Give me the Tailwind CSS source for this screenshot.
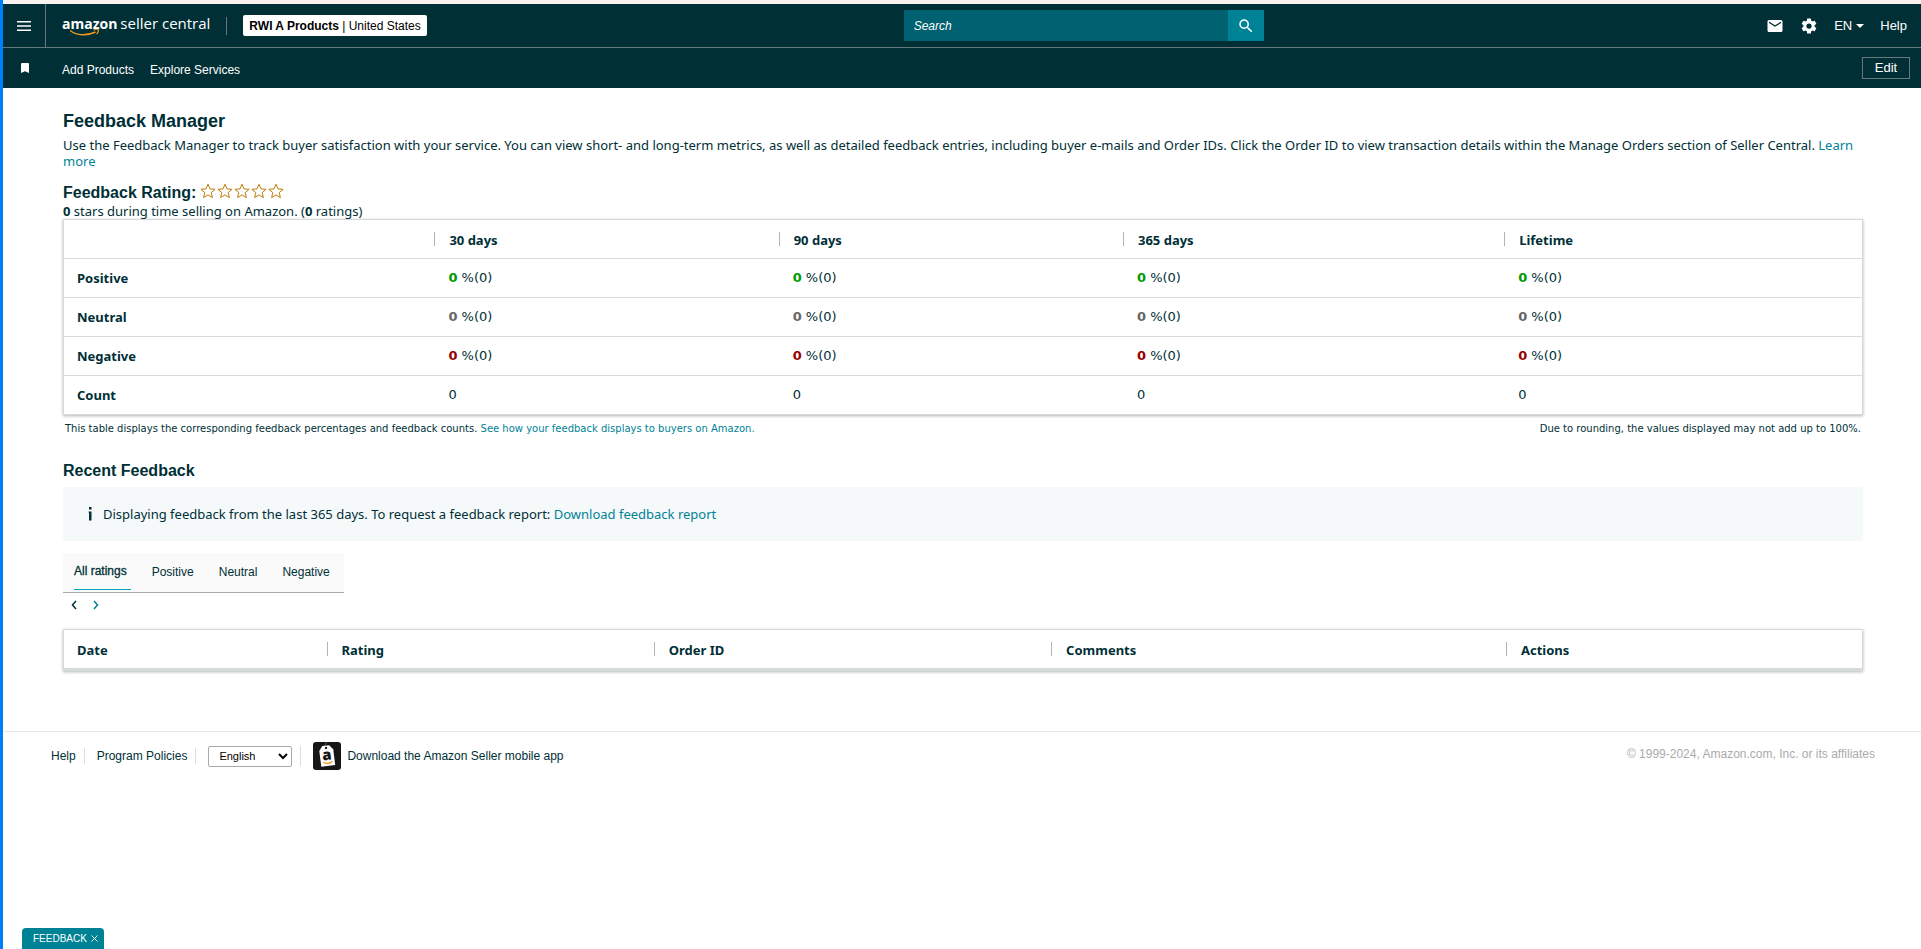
<!DOCTYPE html>
<html lang="en">
<head>
  <meta charset="UTF-8">
  <meta name="viewport" content="width=device-width, initial-scale=1.0">
  <title>Feedback Manager</title>
  <script src="https://cdn.jsdelivr.net/npm/@tailwindcss/browser@4"></script>
</head>
<body class="min-h-screen flex flex-col border-l-3 border-[#0080f8] bg-white text-[#002f36] text-[13px] leading-4 font-['Noto_Sans',sans-serif]">
  <!-- Header -->
  <header class="border-t-4 border-[#f8f3f1] bg-[#002f36] text-white font-['Liberation_Sans',sans-serif]">
    <div class="flex items-center justify-between h-11 border-b border-[#667a7e]">
      <div class="flex flex-[7] items-center h-full">
        <button class="flex items-center justify-center w-[43px] h-full border-r border-[#667a7e]" aria-label="Menu">
          <svg class="w-3.5 h-2.5" viewBox="0 0 14 10" fill="currentColor"><path d="M0 0h14v1.5H0zM0 4.2h14v1.5H0zM0 8.4h14v1.5H0z"/></svg>
        </button>
        <a href="#" class="relative ml-4 flex items-baseline gap-[3px] font-['Open_Sans',sans-serif] leading-5 pb-1">
          <span class="text-sm leading-5 font-bold">amazon</span><span class="text-[15px]">seller central</span>
          <svg class="absolute left-2 top-4 w-8 h-2" viewBox="0 0 32 8" fill="none" stroke="#f19a20"><path d="M0 1.500C7 6.800 17 7 25.500 3" stroke-width="1.400"/><path d="M23.500 1c2-.7 4.300-.8 4.700-.2s-.3 2.800-1.600 4.200" stroke-width="1.200"/></svg>
        </a>
        <span class="ml-4 w-px h-[18px] bg-[#667a7e]"></span>
        <button class="ml-4 h-[21px] px-1.5 rounded-xs bg-white text-black text-xs"><b>RWI A Products</b> | United States</button>
      </div>
      <form class="flex w-[360px] h-[31px]">
        <input type="search" aria-label="Search" placeholder="Search" class="flex-1 min-w-0 px-2.5 bg-[#006170] text-xs italic placeholder:text-white">
        <button type="button" class="flex items-center justify-center w-9 bg-[#008296]" aria-label="Submit search">
          <svg class="w-[18px] h-[18px]" viewBox="0 0 24 24" fill="currentColor"><path d="M15.500 14h-.79l-.28-.27A6.470 6.470 0 0 0 16 9.500 6.500 6.500 0 1 0 9.500 16c1.610 0 3.090-.59 4.230-1.570l.27.280v.79l5 4.990L20.490 19l-4.990-5zm-6 0C7.010 14 5 11.990 5 9.500S7.010 5 9.500 5 14 7.010 14 9.500 11.990 14 9.500 14z"/></svg>
        </button>
      </form>
      <nav class="flex flex-[5] items-center justify-end pr-3.5 text-[13px]">
        <a href="#" aria-label="Messages"><svg class="w-[18px] h-[18px]" viewBox="0 0 24 24" fill="currentColor"><path d="M20 4H4a2 2 0 0 0-2 2v12c0 1.100.9 2 2 2h16a2 2 0 0 0 2-2V6a2 2 0 0 0-2-2zm0 4-8 5-8-5V6l8 5 8-5v2z"/></svg></a>
        <a href="#" class="ml-4" aria-label="Settings"><svg class="w-[18px] h-[18px]" viewBox="0 0 24 24" fill="currentColor"><path d="M19.430 12.980c.04-.32.070-.64.070-.98s-.03-.66-.07-.98l2.110-1.650a.5.5 0 0 0 .12-.64l-2-3.460a.5.5 0 0 0-.61-.22l-2.490 1a7.300 7.300 0 0 0-1.690-.98l-.38-2.650A.49.49 0 0 0 14 2h-4a.49.49 0 0 0-.49.420l-.38 2.650c-.61.250-1.170.59-1.690.98l-2.490-1a.5.5 0 0 0-.61.220l-2 3.460a.5.5 0 0 0 .12.640l2.110 1.650c-.04.320-.07.650-.07.980s.03.660.07.980l-2.110 1.650a.5.5 0 0 0-.12.640l2 3.460c.12.220.39.300.61.220l2.490-1c.52.400 1.080.73 1.690.98l.38 2.650c.03.240.24.420.49.420h4c.25 0 .46-.18.490-.42l.38-2.650a7.700 7.700 0 0 0 1.690-.98l2.490 1c.23.090.49 0 .61-.22l2-3.460a.5.5 0 0 0-.12-.64l-2.110-1.650zM12 15.500a3.500 3.500 0 1 1 0-7 3.500 3.500 0 0 1 0 7z"/></svg></a>
        <button class="ml-4 flex items-center gap-1">EN <svg class="w-2 h-1" viewBox="0 0 8 4" fill="currentColor"><path d="M0 0h8L4 4z"/></svg></button>
        <a href="#" class="ml-4">Help</a>
      </nav>
    </div>
    <div class="flex items-center h-10 pr-[11px] text-xs">
      <button class="flex justify-center w-[43px]" aria-label="Favorites">
        <svg class="w-2 h-2.5" viewBox="0 0 8 10" fill="currentColor"><path d="M0 1a1 1 0 0 1 1-1h6a1 1 0 0 1 1 1v9L4 8.200 0 10z"/></svg>
      </button>
      <nav class="ml-4 pt-[3px] flex gap-4">
        <a href="#">Add Products</a>
        <a href="#">Explore Services</a>
      </nav>
      <button class="ml-auto w-12 h-[22px] border border-[#667a7e] text-[13px]">Edit</button>
    </div>
  </header>

  <main class="pl-15 pr-[58px] pt-[23px]">
    <h1 class="font-['Liberation_Sans',sans-serif] font-bold text-lg leading-5">Feedback Manager</h1>
    <p class="mt-1.5">Use the Feedback Manager to track buyer satisfaction with your service. You can view short- and long-term metrics, as well as detailed feedback entries, including buyer e-mails and Order IDs. Click the Order ID to view transaction details within the Manage Orders section of Seller Central. <a href="#" class="text-[#008296]">Learn more</a></p>

    <!-- Rating summary -->
    <div class="mt-3.5 flex items-center gap-1">
      <h2 class="font-['Liberation_Sans',sans-serif] font-bold text-base leading-5">Feedback Rating:</h2>
      <div class="flex gap-px pb-1" role="img" aria-label="0 out of 5 stars">
        <svg class="w-4 h-4" viewBox="0 0 16 16" fill="none" stroke="#c07c0a"><path d="M8 1.200l2 4.700 5.100.4-3.900 3.300 1.200 5L8 11.900l-4.400 2.700 1.200-5L.9 6.300 6 5.900z"/></svg>
        <svg class="w-4 h-4" viewBox="0 0 16 16" fill="none" stroke="#c07c0a"><path d="M8 1.200l2 4.700 5.100.4-3.900 3.300 1.200 5L8 11.900l-4.400 2.700 1.200-5L.9 6.300 6 5.900z"/></svg>
        <svg class="w-4 h-4" viewBox="0 0 16 16" fill="none" stroke="#c07c0a"><path d="M8 1.200l2 4.700 5.100.4-3.900 3.300 1.200 5L8 11.900l-4.400 2.700 1.200-5L.9 6.300 6 5.900z"/></svg>
        <svg class="w-4 h-4" viewBox="0 0 16 16" fill="none" stroke="#c07c0a"><path d="M8 1.200l2 4.700 5.100.4-3.900 3.300 1.200 5L8 11.900l-4.400 2.700 1.200-5L.9 6.300 6 5.900z"/></svg>
        <svg class="w-4 h-4" viewBox="0 0 16 16" fill="none" stroke="#c07c0a"><path d="M8 1.200l2 4.700 5.100.4-3.900 3.300 1.200 5L8 11.900l-4.400 2.700 1.200-5L.9 6.300 6 5.900z"/></svg>
      </div>
    </div>
    <p><b>0</b> stars during time selling on Amazon. (<b>0</b> ratings)</p>

    <div class="border border-[#d5dbdb] shadow-[0_1px_3px_rgba(0,0,0,0.3)]">
      <table class="w-full table-fixed text-left">
        <thead>
          <tr class="h-[38px]">
            <th class="w-[20.6%]"></th>
            <th class="w-[19.15%]"><div class="h-3.5 leading-4 border-l border-[#aab7b8] pl-3.5">30 days</div></th>
            <th class="w-[19.15%]"><div class="h-3.5 leading-4 border-l border-[#aab7b8] pl-3.5">90 days</div></th>
            <th class="w-[21.2%]"><div class="h-3.5 leading-4 border-l border-[#aab7b8] pl-3.5">365 days</div></th>
            <th><div class="h-3.5 leading-4 border-l border-[#aab7b8] pl-3.5">Lifetime</div></th>
          </tr>
        </thead>
        <tbody class="[&_td]:pl-3.5 [&_td]:font-['DejaVu_Sans',sans-serif] [&_th]:pl-[13px]">
          <tr class="h-[39px] border-t border-[#d5dbdb]">
            <th>Positive</th>
            <td><b class="text-[#009900]">0</b> %(0)</td>
            <td><b class="text-[#009900]">0</b> %(0)</td>
            <td><b class="text-[#009900]">0</b> %(0)</td>
            <td><b class="text-[#009900]">0</b> %(0)</td>
          </tr>
          <tr class="h-[39px] border-t border-[#d5dbdb]">
            <th>Neutral</th>
            <td><b class="text-[#666666]">0</b> %(0)</td>
            <td><b class="text-[#666666]">0</b> %(0)</td>
            <td><b class="text-[#666666]">0</b> %(0)</td>
            <td><b class="text-[#666666]">0</b> %(0)</td>
          </tr>
          <tr class="h-[39px] border-t border-[#d5dbdb]">
            <th>Negative</th>
            <td><b class="text-[#990000]">0</b> %(0)</td>
            <td><b class="text-[#990000]">0</b> %(0)</td>
            <td><b class="text-[#990000]">0</b> %(0)</td>
            <td><b class="text-[#990000]">0</b> %(0)</td>
          </tr>
          <tr class="h-[39px] border-t border-[#d5dbdb]">
            <th>Count</th>
            <td>0</td>
            <td>0</td>
            <td>0</td>
            <td>0</td>
          </tr>
        </tbody>
      </table>
    </div>
    <div class="mt-1.5 px-0.5 flex justify-between font-['DejaVu_Sans',sans-serif] text-[10px] leading-4">
      <p>This table displays the corresponding feedback percentages and feedback counts. <a href="#" class="text-[#008296]">See how your feedback displays to buyers on Amazon.</a></p>
      <p>Due to rounding, the values displayed may not add up to 100%.</p>
    </div>

    <!-- Recent feedback -->
    <h2 class="mt-6 font-['Liberation_Sans',sans-serif] font-bold text-base leading-5">Recent Feedback</h2>
    <div class="mt-1.5 flex items-center h-[54px] pl-6 bg-[#f5f9fa]">
      <svg class="w-1.5 h-3.5 mr-2.5" viewBox="0 0 6 14" fill="currentColor"><path d="M2 0h2.500v2.500H2zM1.500 4.500h3v9H2V5.500h-.5z"/></svg>
      <p>Displaying feedback from the last 365 days. To request a feedback report: <a href="#" class="text-[#008296]">Download feedback report</a></p>
    </div>

    <div class="mt-3 flex w-fit h-10 pl-[11px] pr-3.5 gap-[21px] bg-[#fafafa] border-b border-[#aaaaaa] font-['Liberation_Sans',sans-serif] text-xs" role="tablist">
      <button role="tab" aria-selected="true" class="h-[37px] pr-1 -mr-1 border-b border-[#00a4b4] [-webkit-text-stroke:0.3px]">All ratings</button>
      <button role="tab" class="h-[37px] pl-1">Positive</button>
      <button role="tab" class="h-[37px] pl-1">Neutral</button>
      <button role="tab" class="h-[37px] pl-1">Negative</button>
    </div>
    <div class="flex gap-4 h-6 pl-2 items-center">
      <button aria-label="Previous page"><svg class="w-1.5 h-2.5" viewBox="0 0 6 10" fill="none" stroke="#002f36" stroke-width="1.500"><path d="M5 1 1.500 5 5 9"/></svg></button>
      <button aria-label="Next page"><svg class="w-1.5 h-2.5" viewBox="0 0 6 10" fill="none" stroke="#008296" stroke-width="1.500"><path d="m1 1 3.500 4L1 9"/></svg></button>
    </div>

    <div class="mt-3 border border-b-3 border-[#d5dbdb] shadow-[0_1px_3px_rgba(0,0,0,0.3)]">
      <table class="w-full table-fixed text-left">
        <thead>
          <tr class="h-[38px]">
            <th class="w-[14.6%]"><div class="h-3.5 leading-4 pl-[13px]">Date</div></th>
            <th class="w-[18.2%]"><div class="h-3.5 leading-4 border-l border-[#aab7b8] pl-3.5">Rating</div></th>
            <th class="w-[22.1%]"><div class="h-3.5 leading-4 border-l border-[#aab7b8] pl-3.5">Order ID</div></th>
            <th class="w-[25.3%]"><div class="h-3.5 leading-4 border-l border-[#aab7b8] pl-3.5">Comments</div></th>
            <th><div class="h-3.5 leading-4 border-l border-[#aab7b8] pl-3.5">Actions</div></th>
          </tr>
        </thead>
      </table>
    </div>
  </main>

  <!-- Footer -->
  <footer class="mt-15 flex justify-between border-t border-[#e7e7e7] pl-12 pr-[46px] font-['Liberation_Sans',sans-serif] text-xs">
    <div class="flex items-center h-12">
      <a href="#">Help</a>
      <span class="ml-2 mr-3 w-px h-4 bg-[#dddddd]"></span>
      <a href="#">Program Policies</a>
      <span class="ml-2 mr-3 w-px h-4 bg-[#dddddd]"></span>
      <select aria-label="Language" class="w-[84px] h-[21px] px-1.5 border border-[#aaaaaa] rounded-xs bg-white text-black text-[11px]">
        <option>English</option>
      </select>
      <span class="ml-2 mr-3 w-px h-5 bg-[#dddddd]"></span>
      <a href="#" class="flex items-center gap-1.5">
        <svg class="w-7 h-7" viewBox="0 0 28 28"><rect width="28" height="28" rx="3" fill="#161616"/><path d="M12.500 5c-1-2 0-4 2-5" fill="none" stroke="#555"/><g transform="rotate(-7 14 14)"><path d="M10.500 3.500h7L21 8v16H7V8z" fill="#fff"/><circle cx="14" cy="5.800" r="1.200" fill="#161616"/><path d="M9.500 19.800c3 2.200 6.500 2.200 9.200 0" fill="none" stroke="#f19a20" stroke-width="1.300"/><text x="14" y="18" text-anchor="middle" font-family="Open Sans" font-weight="800" font-size="15" fill="#161616">a</text></g></svg>
        Download the Amazon Seller mobile app
      </a>
    </div>
    <p class="mt-3.5 text-[#aaaaaa]">© 1999-2024, Amazon.com, Inc. or its affiliates</p>
  </footer>

  <!-- Feedback tab -->
  <button class="fixed bottom-0 left-[22px] flex items-center gap-1 h-[21px] pl-[11px] pr-1.5 rounded-t-sm bg-[#008296] text-white font-['Liberation_Sans',sans-serif] text-[10px]">
    FEEDBACK
    <svg class="w-[7px] h-[7px]" viewBox="0 0 7 7" stroke="currentColor"><path d="m.5.5 6 6M6.500.5l-6 6"/></svg>
  </button>
</body>
</html>
